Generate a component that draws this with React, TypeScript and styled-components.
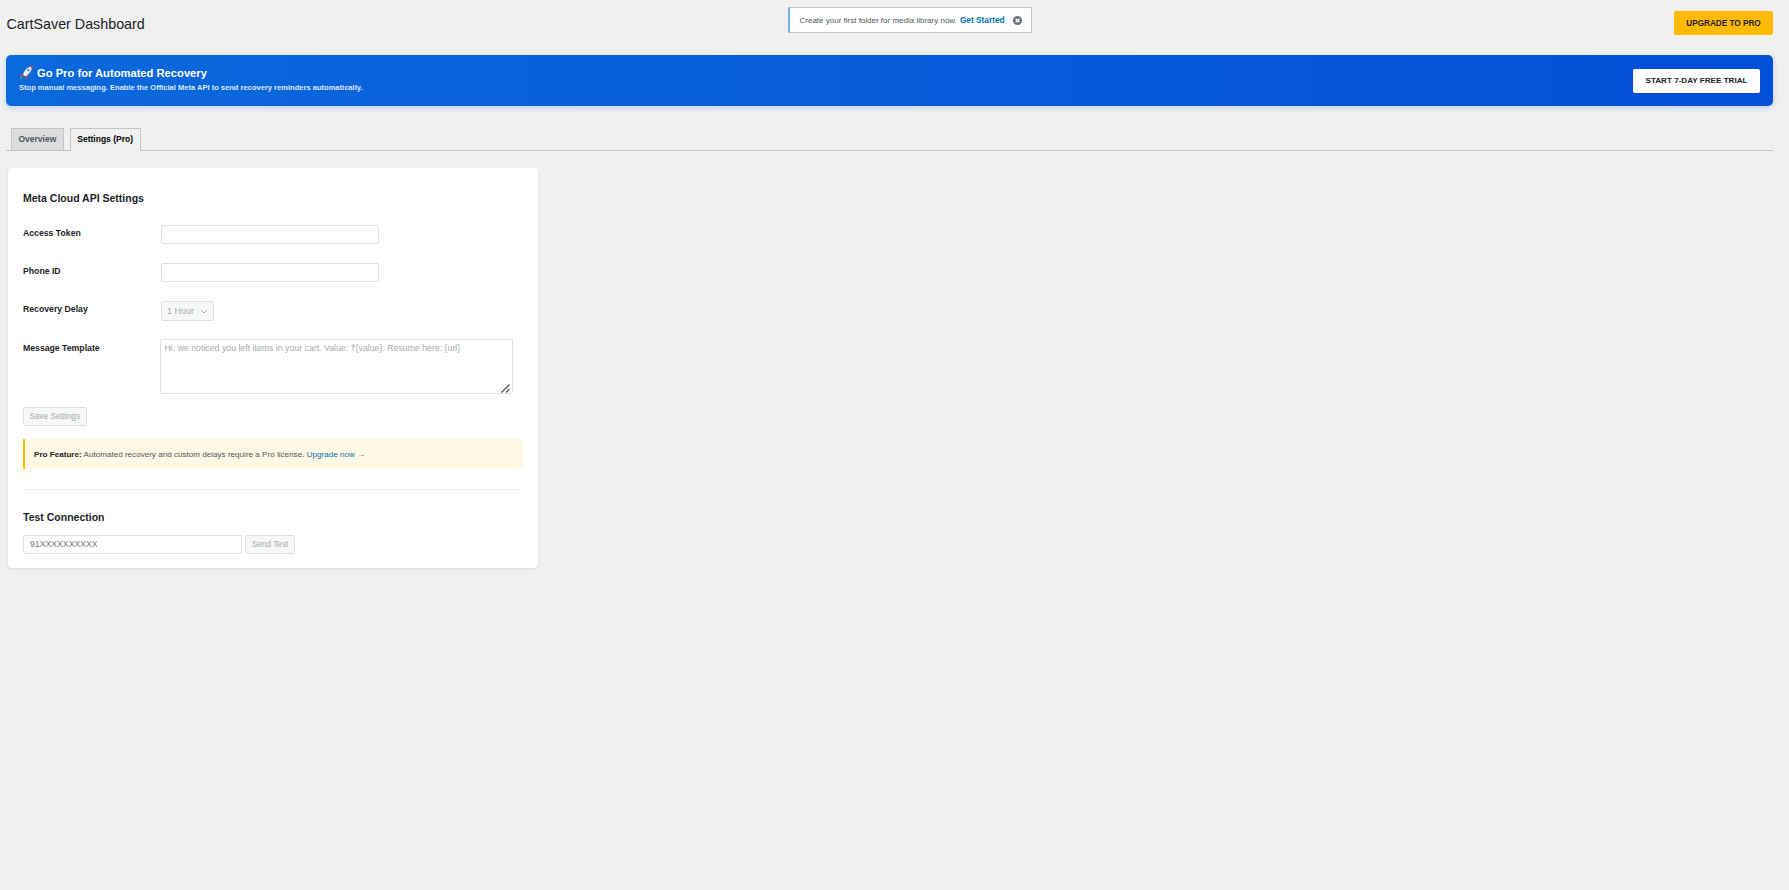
import styled, { createGlobalStyle } from "styled-components";

const GlobalStyle = createGlobalStyle`
html, body { margin: 0; padding: 0; background: #f0f0f1; }
body { font-family: "Liberation Sans", Arial, sans-serif; color: #1d2327; }
* { box-sizing: border-box; }
`;

const Page = styled.div`
min-height: 890px;
padding: 0 16px 0 6px;
background: #f0f0f1;
`;

const TopBar = styled.header`
display: grid;
grid-template-columns: 782px auto 1fr;
align-items: flex-start;
height: 55px;
`;

const PageTitle = styled.h1`
margin: 15.5px 0 0 0.5px;
font-size: 14.3px;
line-height: 17px;
font-weight: 400;
color: #1d2327;
`;

const Notice = styled.div`
display: flex;
align-items: center;
height: 26px;
margin-top: 7px;
padding: 0 9px 0 9.5px;
background: #fff;
border: 1px solid #c3c4c7;
border-left: 2px solid #72aee6;
font-size: 8px;
color: #50575e;
`;

const NoticeLink = styled.a`
margin-left: 3px;
font-size: 8.3px;
font-weight: 700;
color: #0073aa;
`;

const NoticeClose = styled.svg`
width: 9px;
height: 9px;
margin-left: 8px;
`;

const UpgradeButton = styled.a`
justify-self: end;
display: flex;
align-items: center;
justify-content: center;
width: 99px;
height: 24px;
margin-top: 11px;
border-radius: 2px;
background: #ffb900;
font-size: 8.2px;
font-weight: 700;
color: #1d2327;
`;

const Banner = styled.section`
display: flex;
align-items: center;
justify-content: space-between;
height: 51px;
padding: 0 13px;
border-radius: 5px;
background: linear-gradient(90deg, #0a69dc, #044fd8);
box-shadow: 0 2px 6px rgba(10, 80, 210, 0.2);
color: #fff;
`;

const BannerCopy = styled.div`
padding-bottom: 3px;
`;

const BannerTitle = styled.div`
display: flex;
align-items: center;
gap: 4px;
font-size: 11.2px;
line-height: 14px;
font-weight: 700;
`;

const BannerText = styled.p`
margin: 3px 0 0;
font-size: 7.55px;
line-height: 10px;
font-weight: 700;
opacity: 0.85;
`;

const TrialButton = styled.a`
display: flex;
align-items: center;
justify-content: center;
width: 127px;
height: 24px;
border-radius: 2px;
background: #fff;
font-size: 8.1px;
font-weight: 700;
color: #1d2327;
`;

const TabBar = styled.nav`
display: flex;
align-items: flex-end;
gap: 6px;
height: 45px;
margin-bottom: 17px;
padding-left: 5px;
border-bottom: 1px solid #c3c4c7;
`;

const Tab = styled.a<{ $active?: boolean }>`
display: flex;
align-items: center;
justify-content: center;
height: ${props => (props.$active ? "23px" : "22px")};
margin-bottom: ${props => (props.$active ? "-1px" : "0")};
padding: 0 6.5px 1px;
border: 1px solid #c3c4c7;
border-bottom: ${props => (props.$active ? "1px solid #f0f0f1" : "none")};
background: ${props => (props.$active ? "#f0f0f1" : "#dcdcde")};
font-size: 8.5px;
font-weight: 700;
color: ${props => (props.$active ? "#000" : "#50575e")};
`;

const Card = styled.main`
width: 530px;
height: 400px;
margin-left: 2px;
padding: 24px 15px 0 15px;
border-radius: 4px;
background: #fff;
box-shadow: 0 1px 3px rgba(0, 0, 0, 0.1);
`;

const SectionTitle = styled.h2`
margin: 0;
font-size: 10.5px;
line-height: 13px;
font-weight: 700;
color: #1d2327;
`;

const FormFields = styled.div`
margin-top: 20px;
`;

const FormRow = styled.div<{ $height: number }>`
display: flex;
height: ${props => props.$height}px;
`;

const Label = styled.label<{ $top?: number }>`
width: 138px;
margin-top: ${props => props.$top ?? 2}px;
font-size: 8.7px;
line-height: 12px;
font-weight: 700;
color: #1d2327;
`;

const TextInput = styled.input`
display: block;
width: 218px;
height: 19px;
border: 1px solid #e0e0e0;
border-radius: 2px;
background: #fff;
`;

const DelaySelect = styled.div`
display: flex;
align-items: center;
justify-content: space-between;
width: 53px;
height: 20px;
padding: 0 5px;
border: 1px solid #e0e0e0;
border-radius: 2px;
background: #f6f7f7;
font-size: 9px;
color: #a7aaad;
`;

const TemplateWrap = styled.div`
position: relative;
width: 353px;
height: 55px;
margin-left: -1px;
`;

const TemplateField = styled.textarea`
display: block;
width: 100%;
height: 100%;
padding: 2px 3.5px;
border: 1px solid #e0e0e0;
border-radius: 2px;
background: #fff;
resize: none;
font-family: "Liberation Sans", Arial, sans-serif;
font-size: 8.76px;
line-height: 12px;
&::placeholder { color: #a7aaad; opacity: 1; }
`;

const ResizeGrip = styled.svg`
position: absolute;
right: 3px;
bottom: 1px;
width: 9px;
height: 9px;
`;

const GhostButton = styled.button`
height: 19px;
padding: 0 6px;
border: 1px solid #e0e0e0;
border-radius: 2px;
background: #f6f7f7;
font-family: "Liberation Sans", Arial, sans-serif;
font-size: 8.2px;
color: #a7aaad;
`;

const SaveButton = styled(GhostButton)`
padding: 0 5.5px;
`;

const ProNotice = styled.div`
display: flex;
align-items: center;
height: 30px;
margin: 13px 0 19.5px;
padding-left: 9px;
border-left: 2px solid #ffb900;
background: #fff8e5;
font-size: 8.1px;
color: #50575e;
white-space: pre;
`;

const ProLabel = styled.strong`
color: #1d2327;
`;

const ProLink = styled.a`
color: #0073aa;
`;

const Divider = styled.hr`
margin: 0 0 21.5px;
border: 0;
border-top: 1px solid #f0f0f1;
`;

const TestRow = styled.div`
display: flex;
gap: 3px;
margin-top: 10.5px;
`;

const PhoneInput = styled.input`
width: 219px;
height: 19px;
padding: 0 6px;
border: 1px solid #e0e0e0;
border-radius: 2px;
background: #fff;
font-family: "Liberation Sans", Arial, sans-serif;
font-size: 8.7px;
&::placeholder { color: #72777c; opacity: 1; }
`;

function RocketIcon() {
    return (
        <svg width="14" height="15" viewBox="0 0 13 14">
            <path d="M3 8 L1 9.5 L1.5 11 L4 10 Z" fill="#c8463c" />
            <path d="M6.5 11 L5.5 13.5 L7.5 12.5 L8.5 10 Z" fill="#c8463c" />
            <path d="M3.5 9 C4.5 5 8 1.5 12.5 0.8 C12.5 5.5 9.5 9 6 11 Z" fill="#e8eef4" stroke="#33415c" strokeWidth="0.4" />
            <path d="M10 1.3 L12.5 0.8 L12.2 3.6 Z" fill="#d8473d" />
            <circle cx="8.8" cy="4.8" r="1.1" fill="#4a8bc4" />
            <path d="M3.6 10.6 L1 13.4 L2 11 Z" fill="#f5a623" />
        </svg>
    );
}

function App() {
    return (
        <Page>
            <GlobalStyle />
            <TopBar>
                <PageTitle>CartSaver Dashboard</PageTitle>
                <Notice>
                    Create your first folder for media library now.
                    <NoticeLink>Get Started</NoticeLink>
                    <NoticeClose viewBox="0 0 10 10">
                        <circle cx="5" cy="5" r="5" fill="#6c7278" />
                        <path d="M3 3 L7 7 M7 3 L3 7" stroke="#fff" strokeWidth="1.4" />
                    </NoticeClose>
                </Notice>
                <UpgradeButton>UPGRADE TO PRO</UpgradeButton>
            </TopBar>
            <Banner>
                <BannerCopy>
                    <BannerTitle>
                        <RocketIcon />
                        Go Pro for Automated Recovery
                    </BannerTitle>
                    <BannerText>Stop manual messaging. Enable the Official Meta API to send recovery reminders automatically.</BannerText>
                </BannerCopy>
                <TrialButton>START 7-DAY FREE TRIAL</TrialButton>
            </Banner>
            <TabBar>
                <Tab>Overview</Tab>
                <Tab $active>Settings (Pro)</Tab>
            </TabBar>
            <Card>
                <SectionTitle>Meta Cloud API Settings</SectionTitle>
                <FormFields>
                    <FormRow $height={38}>
                        <Label>Access Token</Label>
                        <TextInput disabled />
                    </FormRow>
                    <FormRow $height={38}>
                        <Label>Phone ID</Label>
                        <TextInput disabled />
                    </FormRow>
                    <FormRow $height={38}>
                        <Label>Recovery Delay</Label>
                        <DelaySelect>
                            1 Hour
                            <svg width="8" height="5" viewBox="0 0 8 5">
                                <path d="M1 1 L4 4 L7 1" fill="none" stroke="#a7aaad" strokeWidth="1" />
                            </svg>
                        </DelaySelect>
                    </FormRow>
                    <FormRow $height={66}>
                        <Label $top={3}>Message Template</Label>
                        <TemplateWrap>
                            <TemplateField disabled placeholder="Hi, we noticed you left items in your cart. Value: ₹{value}. Resume here: {url}" />
                            <ResizeGrip viewBox="0 0 9 9">
                                <path d="M8.5 0.5 L0.5 8.5 M8.5 5 L5 8.5" stroke="#555" strokeWidth="1.3" fill="none" />
                            </ResizeGrip>
                        </TemplateWrap>
                    </FormRow>
                </FormFields>
                <SaveButton disabled>Save Settings</SaveButton>
                <ProNotice>
                    <ProLabel>Pro Feature:</ProLabel> Automated recovery and custom delays require a Pro license. <ProLink>Upgrade now →</ProLink>
                </ProNotice>
                <Divider />
                <SectionTitle>Test Connection</SectionTitle>
                <TestRow>
                    <PhoneInput disabled placeholder="91XXXXXXXXXX" />
                    <GhostButton disabled>Send Test</GhostButton>
                </TestRow>
            </Card>
        </Page>
    );
}

export default App;
